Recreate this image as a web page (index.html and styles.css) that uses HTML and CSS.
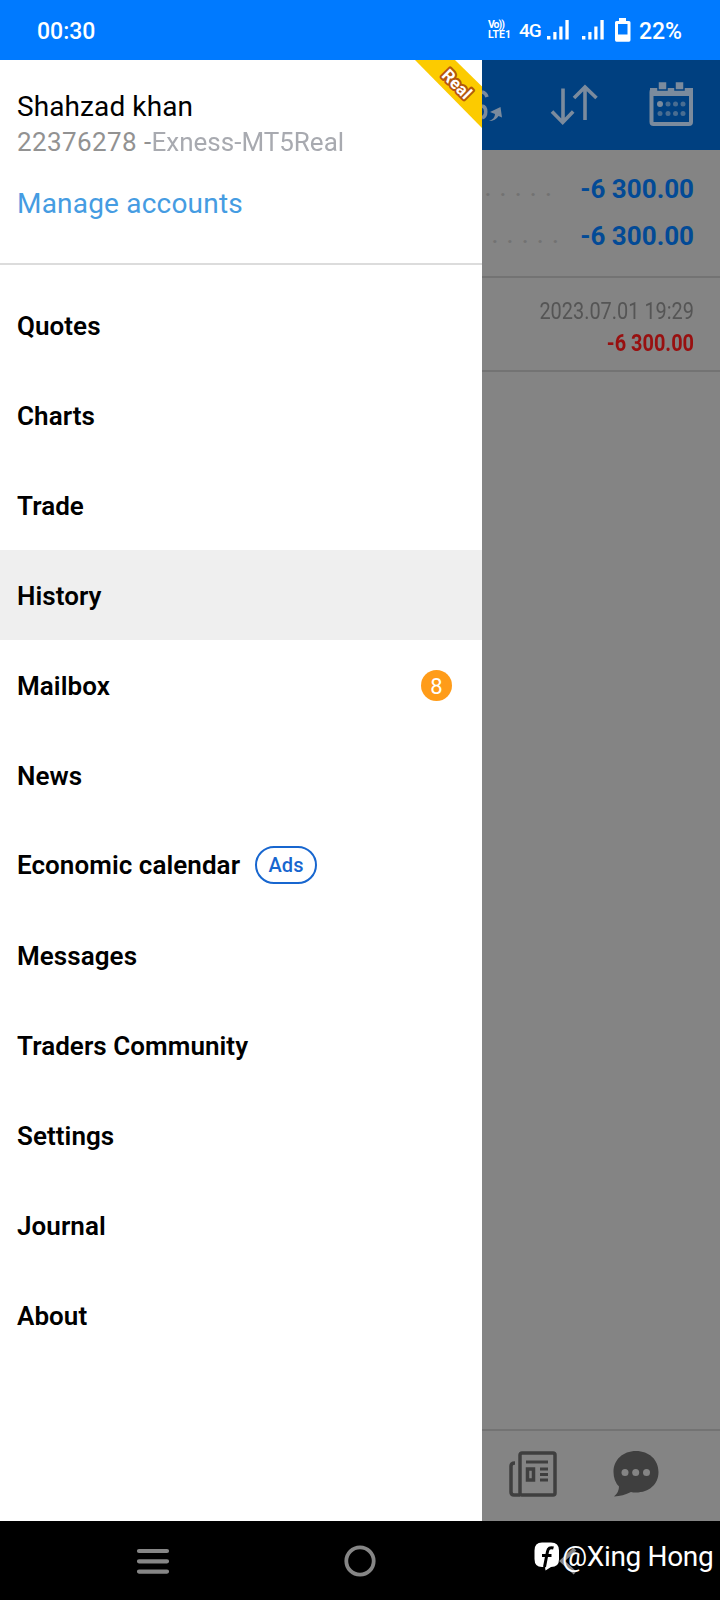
FILE: index.html
```html
<!DOCTYPE html>
<html lang="en">
<head>
    <meta charset="UTF-8">
    <meta name="viewport" content="width=device-width, initial-scale=1.0">
    <title>History</title>
    <link rel="stylesheet" href="styles.css">
</head>
<body>
    <div class="phone">
        <!-- Status bar -->
        <div class="status-bar">
            <span class="time">00:30</span>
            <div class="status-icons">
                <div class="volte"><span class="vo">Vo))</span><span>LTE1</span></div>
                <span class="network">4G</span>
                <svg class="signal" width="22" height="20" viewBox="0 0 22 20" fill="#fff">
                    <path d="M0 16h3.4v3.5H0zM6.3 12h3.2v7.5H6.3zM12.3 6.5h3.2v13h-3.2zM18.4 0h3.3v19.5h-3.3z"/>
                </svg>
                <svg class="signal second" width="22" height="20" viewBox="0 0 22 20" fill="#fff">
                    <path d="M0 16h3.4v3.5H0zM6.3 12h3.2v7.5H6.3zM12.3 6.5h3.2v13h-3.2zM18.4 0h3.3v19.5h-3.3z"/>
                </svg>
                <svg class="battery" width="16" height="24" viewBox="0 0 16 24">
                    <path d="M4 0h7v3h3q1.5 0 1.5 1.5v17.5q0 1.700-1.500 1.700H1.500Q0 23.700 0 22V4.500Q0 3 1.500 3H4z" fill="#fff"/>
                    <path d="M3 6h9.500v10.500H3z" fill="#007aff"/>
                </svg>
                <span class="percent">22%</span>
            </div>
        </div>

        <div class="main">
            <!-- Side menu -->
            <div class="drawer">
                <div class="account">
                    <div class="name">Shahzad khan</div>
                    <div class="login">22376278 -<span class="server">Exness-MT5Real</span></div>
                    <a class="manage">Manage accounts</a>
                    <svg class="ribbon" width="67" height="69" viewBox="0 0 67 69">
                        <path d="M0 0h40L67 26.500V68z" fill="#fccb00"/>
                        <text x="42" y="30" transform="rotate(45 42 24)" text-anchor="middle">Real</text>
                    </svg>
                </div>
                <ul class="menu">
                    <li>Quotes</li>
                    <li>Charts</li>
                    <li>Trade</li>
                    <li class="active">History</li>
                    <li>Mailbox <span class="count">8</span></li>
                    <li>News</li>
                    <li class="with-ads">Economic calendar <span class="ads">Ads</span></li>
                    <li>Messages</li>
                    <li>Traders Community</li>
                    <li>Settings</li>
                    <li>Journal</li>
                    <li>About</li>
                </ul>
            </div>

            <!-- Dimmed history screen -->
            <div class="page">
                <div class="toolbar">
                    <svg width="238" height="90" viewBox="0 0 238 90" fill="none" stroke="#7b8b9d">
                        <path d="M0 32q4 1 5 5M0 46c5 1 5 10 0 12" stroke-width="3.500"/>
                        <path d="M7 61q6-2 6-7l-5-2 10.500-5 1.500 10.500-3.500-1.500q-3 5-9.500 5z" fill="#7b8b9d" stroke="none"/>
                        <path d="M81 28.500v33M70 51.500L80.700 62.500l10.500-11" stroke-width="3.600"/>
                        <path d="M103 60V27M92 38L103 27l11.500 11" stroke-width="3.600"/>
                        <rect x="169.500" y="30" width="39.500" height="34" rx="2" stroke-width="4"/>
                        <path d="M168 28h43v8h-43z" fill="#7b8b9d" stroke="none"/>
                        <path d="M176 21.500v8.500h9v-8.500zM193 21.500v8.500h9v-8.500z" fill="#7b8b9d" stroke="#004080" stroke-width="1.500"/>
                        <g fill="#7b8b9d" stroke="none">
                            <circle cx="178" cy="44" r="3"/>
                            <g opacity=".6">
                                <circle cx="186" cy="44" r="2.500"/><circle cx="193.500" cy="44" r="2.500"/><circle cx="201" cy="44" r="2.500"/>
                                <circle cx="178" cy="53.500" r="2.500"/><circle cx="186" cy="53.500" r="2.500"/><circle cx="193.500" cy="53.500" r="2.500"/><circle cx="201" cy="53.500" r="2.500"/>
                            </g>
                        </g>
                    </svg>
                </div>
                <div class="totals">
                    <div class="total"><span class="dots">.....</span><b>-6 300.00</b></div>
                    <div class="total"><span class="dots shifted">.....</span><b>-6 300.00</b></div>
                </div>
                <div class="deal">
                    <div class="date">2023.07.01 19:29</div>
                    <div class="loss">-6 300.00</div>
                </div>
                <div class="tabs">
                    <svg width="48" height="46" viewBox="0 0 48 46" fill="none" stroke="#3f3f3f" stroke-width="3.500">
                        <rect x="11" y="2" width="35" height="42" rx="2"/>
                        <path d="M11 44H5q-3 0-3-3V15q0-3 4-3"/>
                        <path d="M17 11h22M31 18h8M31 23.500h8M31 29h8" stroke-width="3"/>
                        <rect x="18.500" y="18" width="6" height="11" stroke-width="3.500"/>
                    </svg>
                    <svg width="46" height="46" viewBox="0 0 46 46">
                        <path d="M23 0c13 0 22.500 8.700 22.500 21S36 41.500 23 41.500q-3 0-5-.5Q10 45 1 45.500q5-4 5-10Q.5 30 .5 21C.5 8.700 10 0 23 0z" fill="#3f3f3f"/>
                        <g fill="#848484"><circle cx="12" cy="21.500" r="3.500"/><circle cx="22.700" cy="21.500" r="3.500"/><circle cx="33.500" cy="21.500" r="3.500"/></g>
                    </svg>
                </div>
            </div>
        </div>

        <!-- System navigation -->
        <div class="nav-bar">
            <svg width="34" height="28" viewBox="0 0 34 28" stroke="#868686" stroke-width="4.200" stroke-linecap="round">
                <path d="M3 4h28M3 14.300h28M3 24.600h28"/>
            </svg>
            <svg class="home" width="32" height="32" viewBox="0 0 32 32">
                <circle cx="16" cy="16" r="13.700" fill="none" stroke="#868686" stroke-width="3.800"/>
            </svg>
            <svg class="back" width="18" height="28" viewBox="0 0 18 28">
                <path d="M16 2L3 14l13 12" fill="none" stroke="#868686" stroke-width="4"/>
            </svg>
            <div class="watermark">
                <svg width="26" height="29" viewBox="0 0 26 29">
                    <path d="M8 .5h9q8 0 8 8v9q0 7.500-8 7.500l-5.500 3.500L11 25H8Q.5 25 .5 17V8.500Q.5.5 8 .5z" fill="#fff"/>
                    <path d="M19.500 6q-5-1.500-6 3.500l-3 15.500M8 13.500h9.500" fill="none" stroke="#000" stroke-width="3"/>
                </svg>
                <span>@Xing Hong</span>
            </div>
        </div>
    </div>
</body>
</html>
```
FILE: styles.css
```css
body {
    margin: 0;
    font-family: Roboto, "Liberation Sans", sans-serif;
}
.phone {
    width: 720px;
    height: 1600px;
    display: flex;
    flex-direction: column;
    overflow: hidden;
}
/* Status bar */
.status-bar {
    height: 60px;
    background-color: #007aff;
    color: #fff;
    display: flex;
    align-items: center;
    justify-content: space-between;
    padding: 0 38px 0 37px;
    font-size: 23px;
    font-weight: 500;
    box-sizing: border-box;
}
.time {
    padding-top: 2px;
}
.status-icons {
    display: flex;
    align-items: center;
}
.volte {
    display: flex;
    flex-direction: column;
    font-size: 10.5px;
    line-height: 10px;
    font-weight: 700;
    margin-right: 8px;
}
.vo {
    letter-spacing: -1px;
}
.network {
    width: 21px;
    font-size: 19px;
    letter-spacing: -1px;
    margin-right: 7px;
}
.second {
    margin-left: 13px;
}
.battery {
    margin: 0 8px 0 11px;
}
.percent {
    padding-top: 2px;
}
.main {
    height: 1461px;
    display: flex;
}
/* Side menu */
.drawer {
    width: 482px;
    background-color: #fff;
}
.account {
    position: relative;
    height: 205px;
    padding: 30px 17px 0;
    box-sizing: border-box;
    border-bottom: 2px solid #dcdcdc;
}
.name {
    font-size: 28px;
    line-height: 34px;
    letter-spacing: 0.1px;
    color: #000;
}
.login {
    font-size: 26px;
    line-height: 36px;
    letter-spacing: 0.4px;
    color: #929292;
    white-space: nowrap;
}
.server {
    color: #a8aab0;
    letter-spacing: 0;
    filter: blur(0.6px);
}
.manage {
    display: block;
    margin-top: 26px;
    font-size: 28px;
    line-height: 36px;
    letter-spacing: 0.2px;
    color: #459ce2;
}
.ribbon {
    position: absolute;
    top: 0;
    right: 0;
}
.ribbon text {
    font-size: 17px;
    font-weight: 700;
    fill: #fff;
    stroke: #b4560c;
    stroke-width: 4px;
    stroke-linejoin: round;
    paint-order: stroke;
}
.menu {
    list-style: none;
    margin: 0;
    padding: 15px 0 0;
}
.menu li {
    height: 90px;
    padding: 2px 30px 0 17px;
    box-sizing: border-box;
    display: flex;
    align-items: center;
    font-size: 26px;
    font-weight: 600;
    letter-spacing: 0.06px;
    color: #000;
}
.menu .active {
    background-color: #efefef;
}
.menu .with-ads {
    padding-top: 0;
}
.count {
    width: 31px;
    height: 31px;
    margin: 0 0 2px auto;
    border-radius: 50%;
    background-color: #ff9c19;
    color: #fff;
    font-size: 22px;
    font-weight: 400;
    line-height: 33px;
    text-align: center;
}
.ads {
    width: 62px;
    height: 38px;
    margin-left: 15px;
    box-sizing: border-box;
    border: 2px solid #1766cf;
    border-radius: 19px;
    color: #1766cf;
    font-size: 20px;
    font-weight: 500;
    line-height: 35px;
    text-align: center;
}
/* Dimmed history screen */
.page {
    width: 238px;
    background-color: #848484;
    display: flex;
    flex-direction: column;
}
.toolbar {
    height: 90px;
    background-color: #004080;
}
.totals {
    height: 128px;
    padding: 16px 26px 0 3px;
    box-sizing: border-box;
    border-bottom: 2px solid #737373;
}
.total {
    display: flex;
    justify-content: space-between;
    height: 47px;
    line-height: 46px;
    font-size: 26px;
    color: #024a96;
}
.dots {
    color: #727272;
    font-size: 20px;
    font-weight: 700;
    letter-spacing: 9.3px;
}
.shifted {
    padding-left: 7px;
}
.deal {
    height: 94px;
    padding: 17px 26px 0 0;
    box-sizing: border-box;
    border-bottom: 2px solid #737373;
    text-align: right;
    font-size: 24px;
    line-height: 32px;
}
.date,
.loss {
    transform: scaleX(0.83);
    transform-origin: right;
    white-space: nowrap;
}
.date {
    color: #555;
}
.loss {
    color: #981010;
    font-weight: 700;
}
.tabs {
    height: 92px;
    margin-top: auto;
    padding: 20px 0 0 27px;
    box-sizing: border-box;
    border-top: 2px solid #737373;
    display: flex;
    align-items: flex-start;
    gap: 56px;
}
/* System navigation */
.nav-bar {
    position: relative;
    height: 79px;
    background-color: #000;
    display: flex;
    align-items: center;
    padding-left: 136px;
}
.home {
    margin-left: 174px;
}
.back {
    margin-left: 183px;
}
.watermark {
    position: absolute;
    left: 534px;
    top: 19px;
    display: flex;
    align-items: center;
    gap: 2px;
    color: #fff;
    font-size: 28px;
    letter-spacing: -0.35px;
    white-space: nowrap;
}
```
